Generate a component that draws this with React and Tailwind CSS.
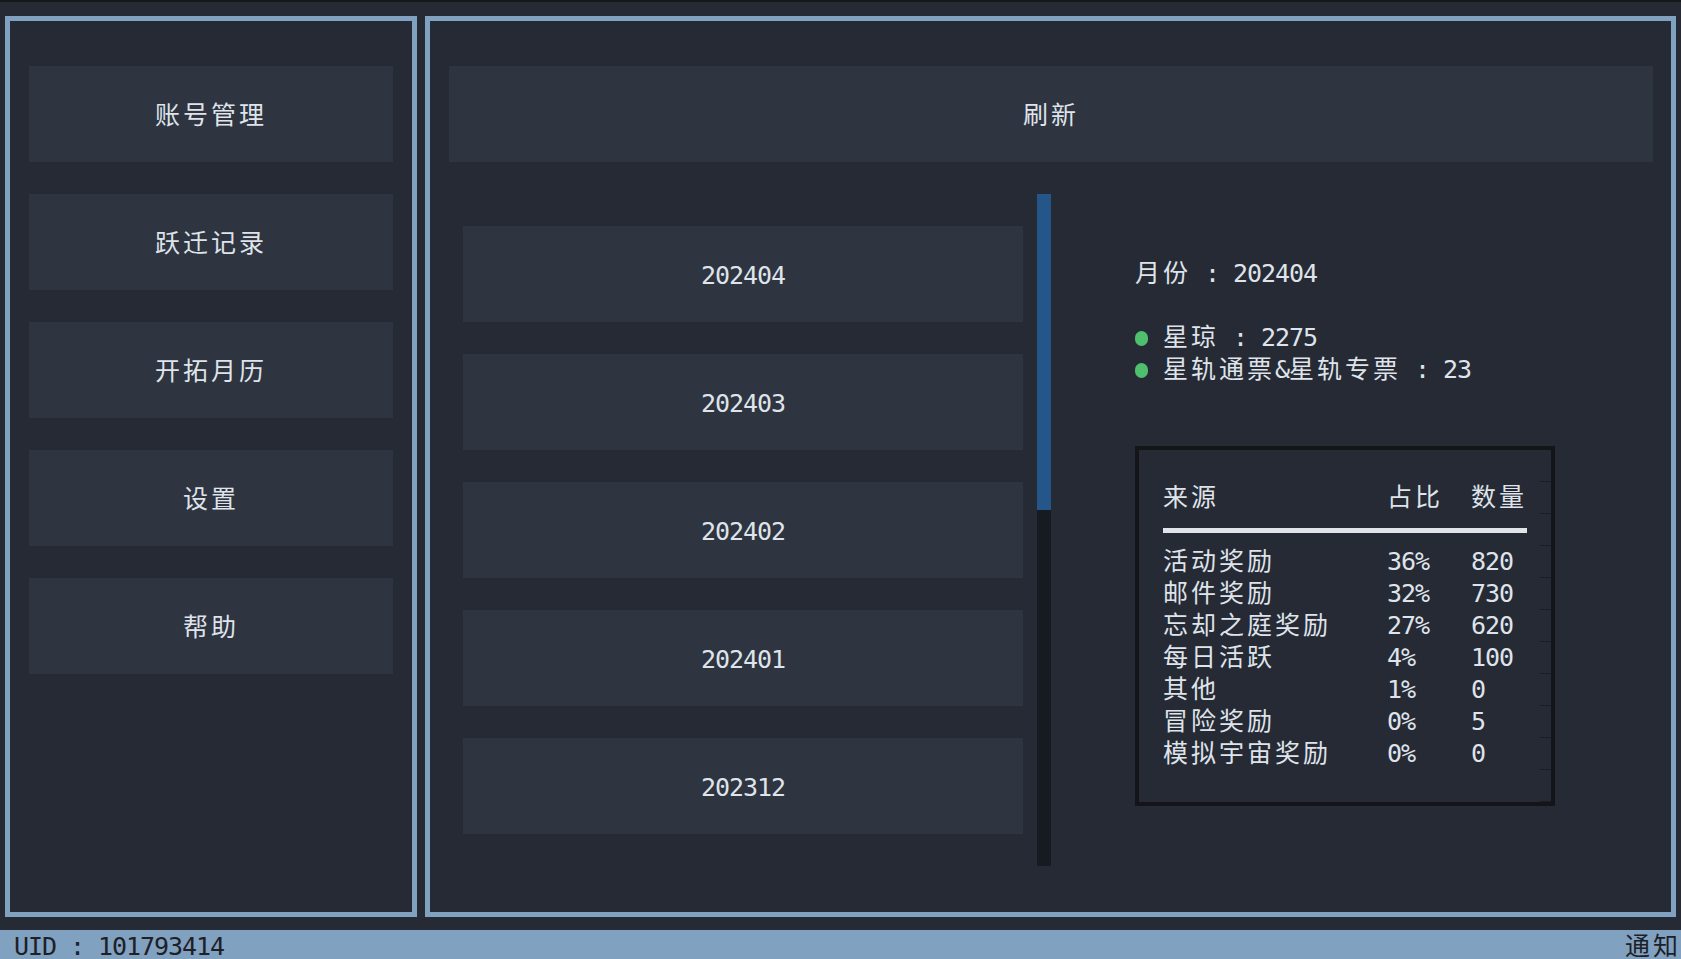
import React from 'react';

const CJK = /([\u3400-\u9fff]+)/;

// terminal-ish text: latin is one cell (14px), CJK is two cells (28px)
const T = ({ children }) => {
  const parts = String(children).split(CJK);
  return (
    <span className="relative top-[2px]">
      {parts.map((p, i) =>
        CJK.test(p) ? (
          <span key={i} className="tracking-[3px]">{p}</span>
        ) : (
          <span key={i}>{p}</span>
        )
      )}
    </span>
  );
};

const NavButton = ({ label }) => (
  <div className="h-[96px] bg-[#2e3440] flex items-center justify-center text-[#dfe3ea]">
    <T>{label}</T>
  </div>
);

const months = ['202404', '202403', '202402', '202401', '202312'];

const rows = [
  ['活动奖励', '36%', '820'],
  ['邮件奖励', '32%', '730'],
  ['忘却之庭奖励', '27%', '620'],
  ['每日活跃', '4%', '100'],
  ['其他', '1%', '0'],
  ['冒险奖励', '0%', '5'],
  ['模拟宇宙奖励', '0%', '0'],
];

const Bullet = ({ children }) => (
  <div className="h-[32px] flex items-center">
    <span className="relative top-[2px] w-[13px] h-[15px] rounded-full bg-[#4ebf6c] mr-[15px]" />
    <T>{children}</T>
  </div>
);

const App = () => {
  return (
    <div
      className="w-[1681px] h-[959px] bg-[#262a35] flex flex-col text-[25px] leading-[32px] tracking-[-1.05px] whitespace-pre"
      style={{ fontFamily: '"DejaVu Sans Mono", "Noto Sans CJK SC", monospace' }}
    >
      <div className="h-[2px] bg-[#16181c]" />
      <div className="flex-1 flex gap-[8px] px-[5px] pt-[14px] pb-[13px]">
        {/* sidebar */}
        <div className="w-[412px] border-[5px] border-[#81a1c1] pt-[45px] px-[19px] flex flex-col gap-[32px]">
          <NavButton label="账号管理" />
          <NavButton label="跃迁记录" />
          <NavButton label="开拓月历" />
          <NavButton label="设置" />
          <NavButton label="帮助" />
        </div>

        {/* main */}
        <div className="flex-1 border-[5px] border-[#81a1c1] pt-[45px] pl-[19px] pr-[18px] flex flex-col">
          <div className="h-[96px] bg-[#2e3440] flex items-center justify-center text-[#dfe3ea]">
            <T>刷新</T>
          </div>

          <div className="mt-[32px] flex">
            {/* month list */}
            <div className="w-[602px] h-[672px] flex">
              <div className="flex-1 px-[14px] pt-[32px] flex flex-col gap-[32px] overflow-hidden">
                {months.map((m) => (
                  <div key={m} className="h-[96px] shrink-0 bg-[#2e3440] flex items-center justify-center text-[#dfe3ea]">
                    <T>{m}</T>
                  </div>
                ))}
              </div>
              <div className="w-[14px] h-full bg-[#161a21] flex flex-col">
                <div className="h-[316px] bg-[#245689]" />
              </div>
            </div>

            {/* details */}
            <div className="pl-[84px] pt-[62px] flex flex-col text-[#dfe3ea]">
              <div className="h-[32px]">
                <T>月份 : 202404</T>
              </div>
              <div className="h-[32px]" />
              <Bullet>星琼 : 2275</Bullet>
              <Bullet>星轨通票&星轨专票 : 23</Bullet>

              <div className="relative mt-[62px] w-[420px] h-[360px] border-4 border-[#131518] pt-[30px] px-[24px]">
                <div className="grid grid-cols-[224px_84px_1fr]">
                  <div><T>来源</T></div>
                  <div><T>占比</T></div>
                  <div><T>数量</T></div>
                </div>
                <div className="h-[32px] pt-[16px]">
                  <div className="h-[5px] w-full bg-[#e1e4e8]" />
                </div>
                {rows.map(([name, pct, num]) => (
                  <div key={name} className="grid grid-cols-[224px_84px_1fr]">
                    <div><T>{name}</T></div>
                    <div><T>{pct}</T></div>
                    <div><T>{num}</T></div>
                  </div>
                ))}
                <div className="absolute right-0 top-0 bottom-0 w-[11px] bg-[repeating-linear-gradient(to_bottom,transparent_0px,transparent_31px,#1a1d23_31px,#1a1d23_32px)]" />
              </div>
            </div>
          </div>
        </div>
      </div>

      {/* status bar */}
      <div className="h-[29px] bg-[#81a1c1] text-[#1d2026] flex items-center justify-between pl-[14px]">
        <T>UID : 101793414</T>
        <T>通知</T>
      </div>
    </div>
  );
};

export default App;
